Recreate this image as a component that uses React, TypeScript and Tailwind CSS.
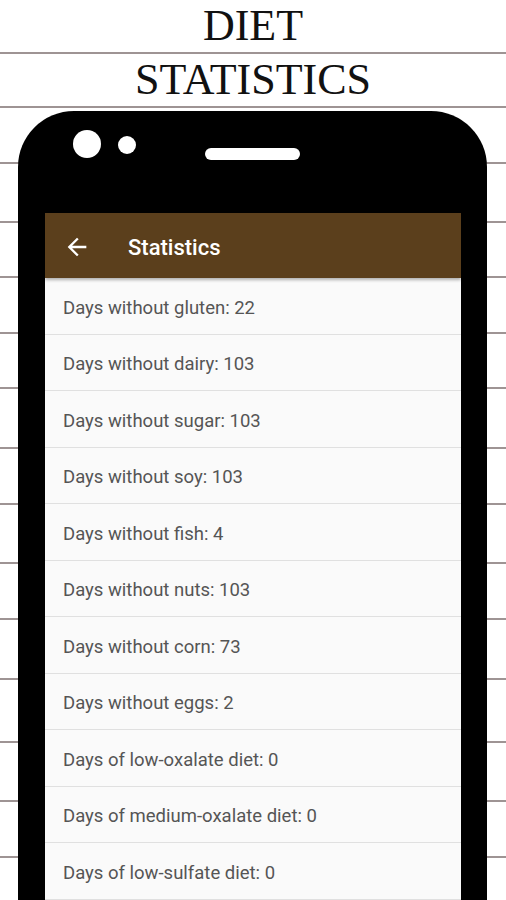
const stats = [
  "Days without gluten: 22",
  "Days without dairy: 103",
  "Days without sugar: 103",
  "Days without soy: 103",
  "Days without fish: 4",
  "Days without nuts: 103",
  "Days without corn: 73",
  "Days without eggs: 2",
  "Days of low-oxalate diet: 0",
  "Days of medium-oxalate diet: 0",
  "Days of low-sulfate diet: 0",
];

function RuledLines() {
  return (
    <div className="absolute inset-0 flex flex-col">
      <div className="h-[52px] shrink-0" />
      <div className="h-[2px] shrink-0 bg-[#9e9494]" />
      <div className="h-[52px] shrink-0" />
      <div className="h-[2px] shrink-0 bg-[#9e9494]" />
      <div className="h-[54px] shrink-0" />
      <div className="h-[2px] shrink-0 bg-[#9e9494]" />
      <div className="h-[57px] shrink-0" />
      <div className="h-[2px] shrink-0 bg-[#9e9494]" />
      <div className="h-[53px] shrink-0" />
      <div className="h-[2px] shrink-0 bg-[#9e9494]" />
      <div className="h-[54px] shrink-0" />
      <div className="h-[2px] shrink-0 bg-[#9e9494]" />
      <div className="h-[53px] shrink-0" />
      <div className="h-[2px] shrink-0 bg-[#9e9494]" />
      <div className="h-[58px] shrink-0" />
      <div className="h-[2px] shrink-0 bg-[#9e9494]" />
      <div className="h-[54px] shrink-0" />
      <div className="h-[2px] shrink-0 bg-[#9e9494]" />
      <div className="h-[57px] shrink-0" />
      <div className="h-[2px] shrink-0 bg-[#9e9494]" />
      <div className="h-[54px] shrink-0" />
      <div className="h-[2px] shrink-0 bg-[#9e9494]" />
      <div className="h-[58px] shrink-0" />
      <div className="h-[2px] shrink-0 bg-[#9e9494]" />
      <div className="h-[61px] shrink-0" />
      <div className="h-[2px] shrink-0 bg-[#9e9494]" />
      <div className="h-[57px] shrink-0" />
      <div className="h-[2px] shrink-0 bg-[#9e9494]" />
      <div className="h-[54px] shrink-0" />
      <div className="h-[2px] shrink-0 bg-[#9e9494]" />
    </div>
  );
}

function BackArrow() {
  return (
    <svg width="28" height="28" viewBox="0 0 24 24" fill="white">
      <path d="M20 11H7.83l5.59-5.59L12 4l-8 8 8 8 1.41-1.41L7.83 13H20v-2z" />
    </svg>
  );
}

export default function App() {
  return (
    <div className="relative w-[506px] h-[900px] overflow-hidden bg-white">
      <RuledLines />

      <div className="relative flex flex-col">
        <h1 className="mt-[-1px] text-center text-[44px] leading-[54px] font-normal text-[#111] font-['Liberation_Serif',serif]">
          DIET
          <br />
          STATISTICS
        </h1>

        {/* phone */}
        <div className="mt-[4px] ml-[18px] w-[469px] h-[800px] bg-black rounded-t-[56px] flex flex-col">
          <div className="h-[102px] shrink-0 flex items-start">
            <div className="ml-[55px] mt-[19px] w-[28px] h-[28px] rounded-full bg-white" />
            <div className="ml-[17px] mt-[25px] w-[18px] h-[18px] rounded-full bg-white" />
            <div className="ml-[69px] mt-[37px] w-[95px] h-[12px] rounded-full bg-white" />
          </div>

          <div className="ml-[27px] w-[416px] flex-1 bg-[#fafafa] font-['Roboto',sans-serif]">
            <div className="relative h-[65px] bg-[#5b3f1c] flex items-center pl-[18px] pt-[3px] shadow-[0_2px_3px_rgba(0,0,0,0.3)]">
              <BackArrow />
              <span className="ml-[37px] text-white text-[22px] font-medium">Statistics</span>
            </div>
            {stats.map((s) => (
              <div
                key={s}
                className="h-[56.5px] flex items-center pl-[18px] pt-[6px] border-b border-[#e0e0e0] text-[18.5px] text-[#555]"
              >
                {s}
              </div>
            ))}
          </div>
        </div>
      </div>
    </div>
  );
}
